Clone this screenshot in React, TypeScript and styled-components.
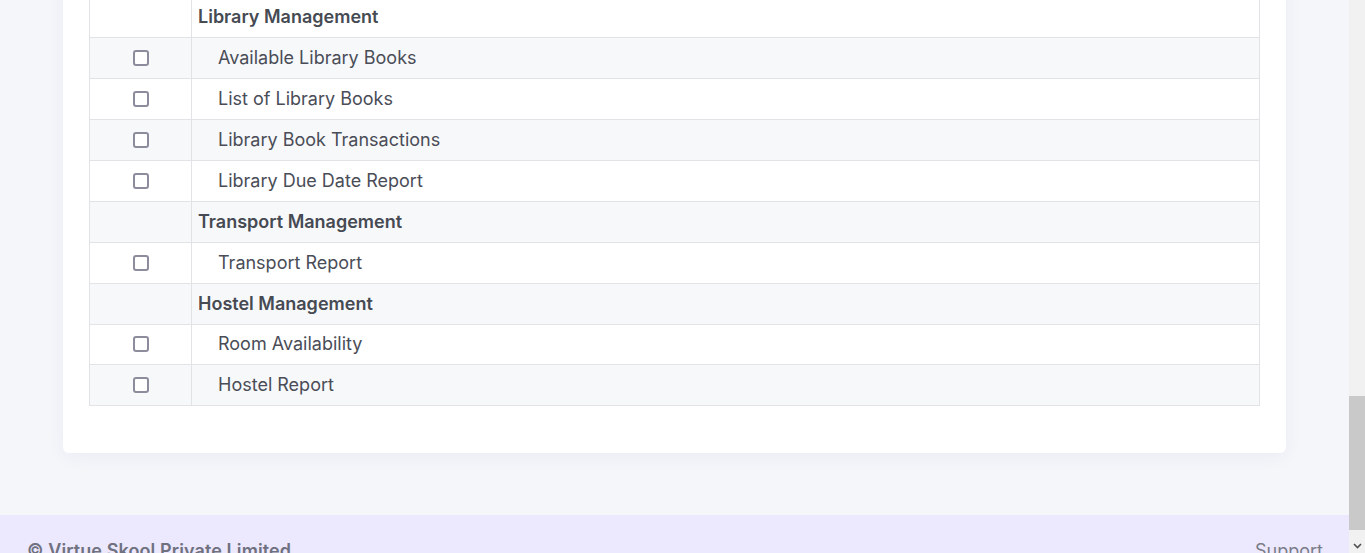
import React, { useLayoutEffect, useRef, useState } from "react";
import styled, { createGlobalStyle } from "styled-components";

const GlobalStyle = createGlobalStyle`
    html, body {
        margin: 0;
        padding: 0;
        background: #f5f6fa;
        font-family: Inter, "Noto Sans", sans-serif;
        color: #4a4d57;
    }
`;

const Page = styled.div`
    min-height: 100vh;
    display: flex;
    flex-direction: column;
    padding-right: 15px;
`;

const Main = styled.main`
    flex: 1;
    padding: 56px 64px 62px 63px;
`;

const PageTitle = styled.h1`
    margin: 0 0 24px;
    font-size: 22px;
    font-weight: 600;
    color: #3b3e48;
`;

const Card = styled.section`
    background: #ffffff;
    border-radius: 6px;
    box-shadow: 0 4px 18px rgba(60, 64, 110, 0.05);
    padding: 26px 26px 47px;
`;

const CardTitle = styled.h2`
    margin: 0 0 22px;
    font-size: 18px;
    font-weight: 600;
    color: #3b3e48;
`;

const Table = styled.table`
    width: 100%;
    border-collapse: collapse;
    border: 1px solid #e2e3e7;
    font-size: 18px;
`;

const Row = styled.tr<{ $striped: boolean }>`
    height: 40.9px;
    background: ${({ $striped }) => ($striped ? "#f7f8fa" : "#ffffff")};
    border-bottom: 1px solid #e2e3e7;
`;

const CheckCell = styled.td`
    width: 101px;
    padding: 0;
    text-align: center;
    vertical-align: middle;
    border-right: 1px solid #e2e3e7;
`;

const NameCell = styled.td<{ $section: boolean }>`
    padding: 0 0 0 ${({ $section }) => ($section ? "6px" : "26px")};
    vertical-align: middle;
    font-weight: ${({ $section }) => ($section ? 600 : 400)};
    color: ${({ $section }) => ($section ? "#464a53" : "#4a4d57")};
    line-height: 20px;
`;

const HeadCell = styled.th`
    height: 40px;
    padding: 0 0 0 6px;
    text-align: left;
    font-weight: 600;
    color: #3b3e48;
    border-right: 1px solid #e2e3e7;
    &:first-child {
        text-align: center;
        padding: 0;
    }
`;

const Check = styled.input.attrs({ type: "checkbox" })`
    appearance: none;
    display: block;
    margin: 0 auto;
    width: 16px;
    height: 16px;
    border: 2px solid #8d8c9c;
    border-radius: 3px;
    background: #ffffff;
    box-sizing: border-box;
    cursor: pointer;
    &:checked {
        background: #6c5dd3;
        border-color: #6c5dd3;
    }
`;

const Footer = styled.footer`
    display: flex;
    justify-content: space-between;
    align-items: flex-start;
    height: 71px;
    box-sizing: border-box;
    padding: 25px 27px 0;
    background: #ece8fd;
    font-size: 18px;
    color: #6f7180;
`;

const Copyright = styled.span`
    font-weight: 600;
    letter-spacing: 0.1px;
`;

const SupportLink = styled.a`
    color: #7a7c88;
    text-decoration: none;
`;

/* stand-in for the browser scrollbar, which headless capture hides */
const ScrollTrack = styled.div`
    position: fixed;
    top: 0;
    right: 0;
    width: 16px;
    height: 100vh;
    background: #f1f1f1;
`;

const ScrollThumb = styled.div`
    position: absolute;
    left: 0;
    right: 0;
    background: #c9c9c9;
`;

const ScrollArrow = styled.div`
    position: absolute;
    left: 0;
    right: 0;
    bottom: 0;
    height: 15px;
    display: flex;
    align-items: center;
    justify-content: center;
    color: #505050;
`;

type Item = { name: string; section?: boolean };

const earlier: Item[] = [
    { name: "Student Management", section: true },
    { name: "Student Details Report" },
    { name: "Student Strength Report" },
    { name: "Student Birthday Report" },
    { name: "Student ID Cards" },
    { name: "Admission Report" },
    { name: "Staff Management", section: true },
    { name: "Staff Details Report" },
    { name: "Staff Attendance Report" },
    { name: "Staff Leave Report" },
    { name: "Fee Management", section: true },
    { name: "Fee Collection Report" },
    { name: "Fee Due Report" },
    { name: "Fee Concession Report" },
    { name: "Daily Fee Collection" },
    { name: "Fee Receipt Report" },
    { name: "Attendance Management", section: true },
    { name: "Daily Attendance Report" },
    { name: "Monthly Attendance Report" },
    { name: "Absentee Report" },
    { name: "Exam Management", section: true },
    { name: "Exam Schedule" },
    { name: "Marks Register" },
    { name: "Progress Report" },
    { name: "Result Analysis" },
    { name: "Hall Tickets" },
    { name: "Timetable Management", section: true },
    { name: "Class Timetable" },
    { name: "Teacher Timetable" },
    { name: "Communication", section: true },
    { name: "SMS Report" },
    { name: "Email Report" },
    { name: "Notice Board Report" },
];

const visible: Item[] = [
    { name: "Library Management", section: true },
    { name: "Available Library Books" },
    { name: "List of Library Books" },
    { name: "Library Book Transactions" },
    { name: "Library Due Date Report" },
    { name: "Transport Management", section: true },
    { name: "Transport Report" },
    { name: "Hostel Management", section: true },
    { name: "Room Availability" },
    { name: "Hostel Report" },
];

const items = [...earlier, ...visible];
const anchorIndex = earlier.length;

export default function App() {
    const anchorRef = useRef<HTMLTableRowElement>(null);
    const [thumb, setThumb] = useState({ top: 396, height: 134 });

    useLayoutEffect(() => {
        const row = anchorRef.current;
        if (!row) return;
        const top = row.getBoundingClientRect().top + window.scrollY;
        window.scrollTo(0, top + 3);

        const view = window.innerHeight;
        const full = document.documentElement.scrollHeight;
        const track = view - 30;
        const height = Math.max(20, (track * view) / full);
        const ratio = full > view ? window.scrollY / (full - view) : 0;
        setThumb({ top: 15 + (track - height) * ratio, height });
    }, []);

    return (
        <>
            <GlobalStyle />
            <Page>
                <Main>
                    <PageTitle>Report Permissions</PageTitle>
                    <Card>
                        <CardTitle>Assign Reports</CardTitle>
                        <Table>
                            <thead>
                                <Row $striped={false}>
                                    <HeadCell>Select</HeadCell>
                                    <HeadCell>Report Name</HeadCell>
                                </Row>
                            </thead>
                            <tbody>
                                {items.map((item, i) => (
                                    <Row
                                        $striped={i % 2 === 0}
                                        key={item.name}
                                        ref={i === anchorIndex ? anchorRef : undefined}
                                    >
                                        <CheckCell>{!item.section && <Check aria-label={item.name} />}</CheckCell>
                                        <NameCell $section={!!item.section}>{item.name}</NameCell>
                                    </Row>
                                ))}
                            </tbody>
                        </Table>
                    </Card>
                </Main>
                <Footer>
                    <Copyright>© Virtue Skool Private Limited</Copyright>
                    <SupportLink href="#">Support</SupportLink>
                </Footer>
            </Page>
            <ScrollTrack>
                <ScrollThumb style={{ top: thumb.top, height: thumb.height }} />
                <ScrollArrow>
                    <svg width="9" height="6" viewBox="0 0 9 6">
                        <path d="M1 1l3.5 3.5L8 1" fill="none" stroke="currentColor" strokeWidth="1.6" />
                    </svg>
                </ScrollArrow>
            </ScrollTrack>
        </>
    );
}
